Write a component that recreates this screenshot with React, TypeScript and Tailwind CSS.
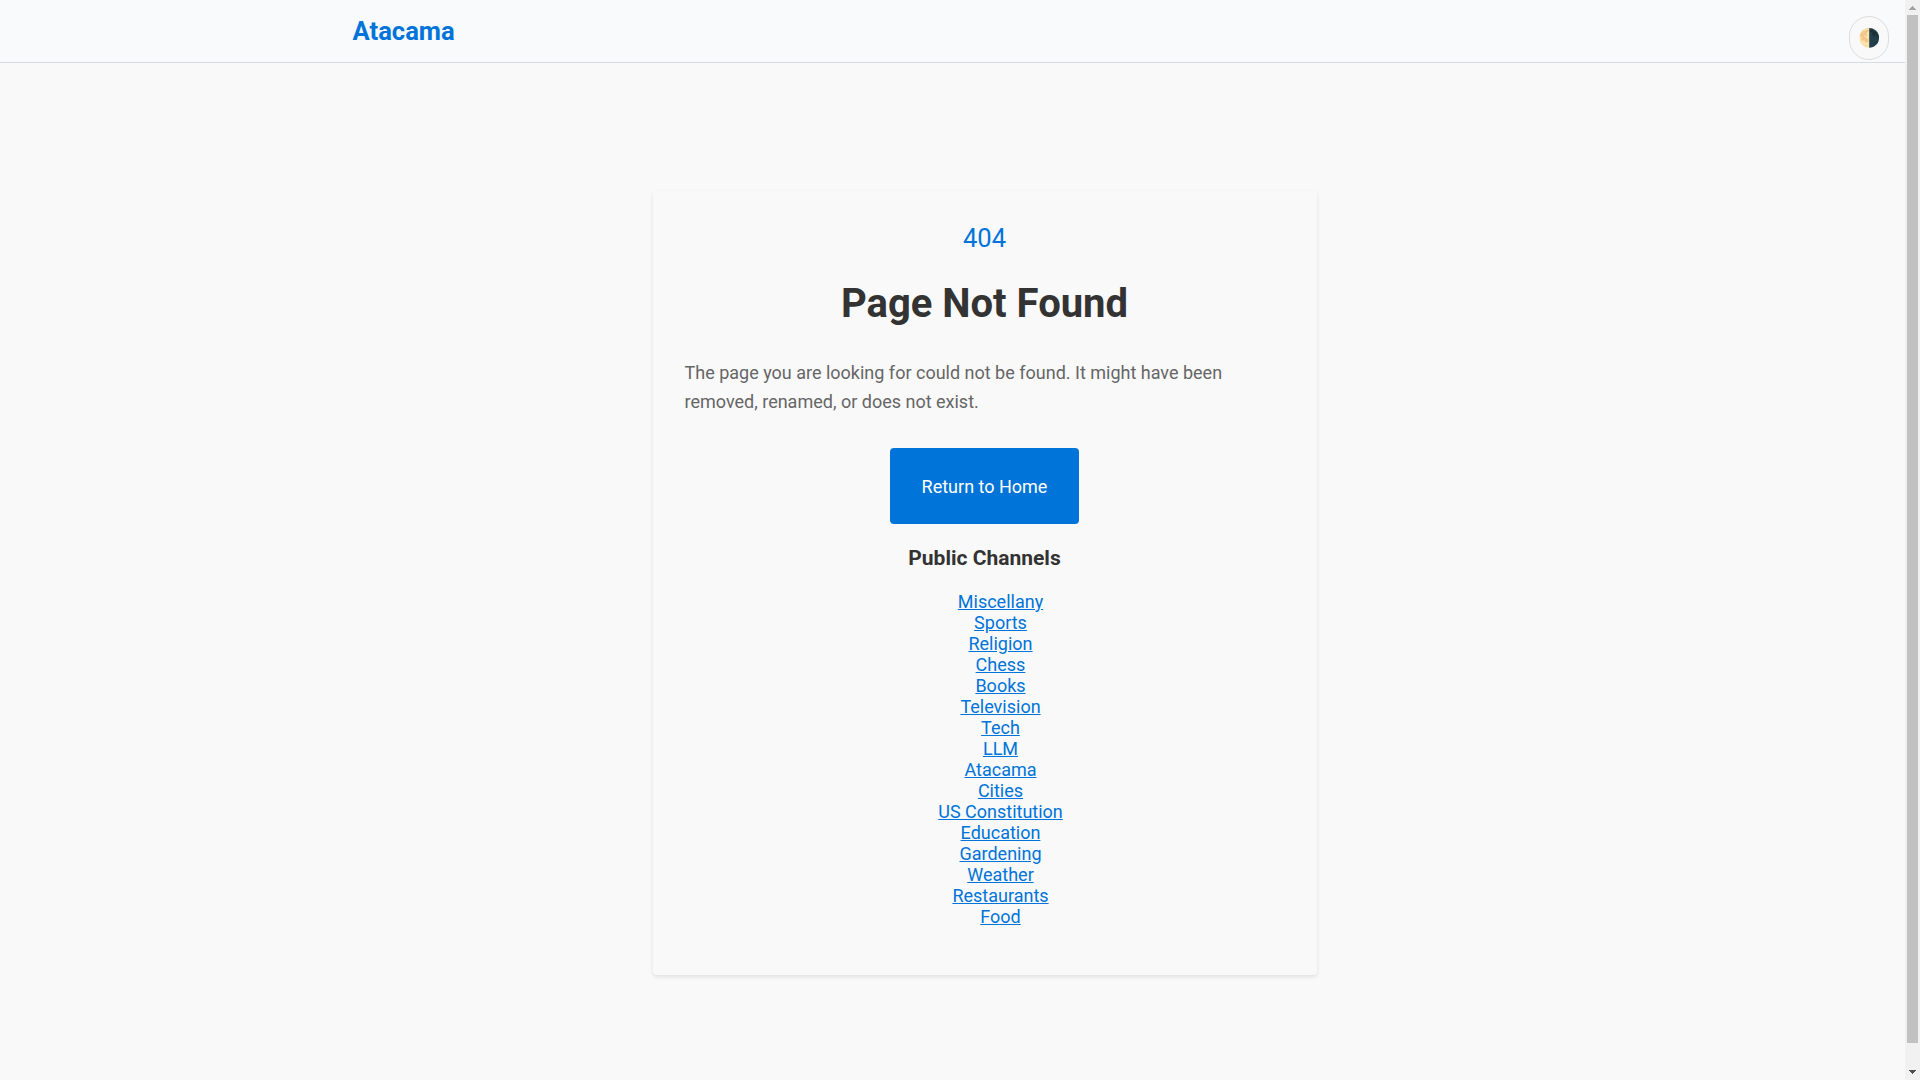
import React from "react";

const channels = [
  "Miscellany",
  "Sports",
  "Religion",
  "Chess",
  "Books",
  "Television",
  "Tech",
  "LLM",
  "Atacama",
  "Cities",
  "US Constitution",
  "Education",
  "Gardening",
  "Weather",
  "Restaurants",
  "Food",
];

const Header = () => {
  return (
    <header className="flex h-[63px] items-start justify-between border-b border-[#d5dbe1] bg-[#f8fafc] pl-[352.5px] pr-4">
      <a href="#" className="mt-4 text-[25.6px] font-bold leading-[30px] text-[#0074d9]">
        Atacama
      </a>
      <button
        aria-label="Toggle theme"
        className="mt-4 flex h-11 w-10 items-center justify-center rounded-full border border-[#dddddd] bg-[#f9f9f9] pb-0.5 pr-px text-[18px] leading-[21px]"
      >
        🌗
      </button>
    </header>
  );
};

const NotFoundCard = () => {
  return (
    <section className="ml-[652.5px] mt-[128px] h-[784px] w-[664px] rounded bg-[#f9f9f9] px-8 pt-8 text-center shadow-[0_2px_4px_rgba(0,0,0,0.1)]">
      <div className="text-[25.6px] leading-[30px] text-[#0074d9]">404</div>
      <h1 className="mt-[27px] text-[40px] font-bold leading-[47px] text-[#333333]">Page Not Found</h1>
      <p className="mt-[31px] text-left leading-[29px] text-[#666666]">
        The page you are looking for could not be found. It might have been removed, renamed, or does not exist.
      </p>
      <a
        href="#"
        className="mt-8 inline-flex h-[76px] w-[189px] items-center justify-center rounded bg-[#0074d9] text-white"
      >
        Return to Home
      </a>
      <h3 className="mt-[22px] text-[21px] font-bold leading-[25px] text-[#333333]">Public Channels</h3>
      <ul className="mt-5 pl-8">
        {channels.map((name) => (
          <li key={name} className="leading-[21px]">
            <a href="#" className="text-[#0074d9] underline">
              {name}
            </a>
          </li>
        ))}
      </ul>
    </section>
  );
};

const Scrollbar = () => {
  return (
    <div className="flex w-[15px] flex-col items-center justify-between bg-[#f1f1f1]">
      <svg width="15" height="15" viewBox="0 0 15 15" shapeRendering="crispEdges">
        <path d="M7 6h1v1h1v1h1v1h1v1H4V9h1V8h1V7h1z" fill="#a3a3a3" />
      </svg>
      <div className="mb-auto h-[1028px] w-[11px] bg-[#c1c1c1]" />
      <svg width="15" height="15" viewBox="0 0 15 15" shapeRendering="crispEdges">
        <path d="M4 5h7v1h-1v1H9v1H8v1H7V8H6V7H5V6H4z" fill="#505050" />
      </svg>
    </div>
  );
};

export default function App() {
  return (
    <div className="flex h-screen overflow-hidden bg-[#f9f9f9] font-[Roboto,sans-serif] text-[18px]">
      <main className="min-w-0 flex-1">
        <Header />
        <NotFoundCard />
      </main>
      <Scrollbar />
    </div>
  );
}
